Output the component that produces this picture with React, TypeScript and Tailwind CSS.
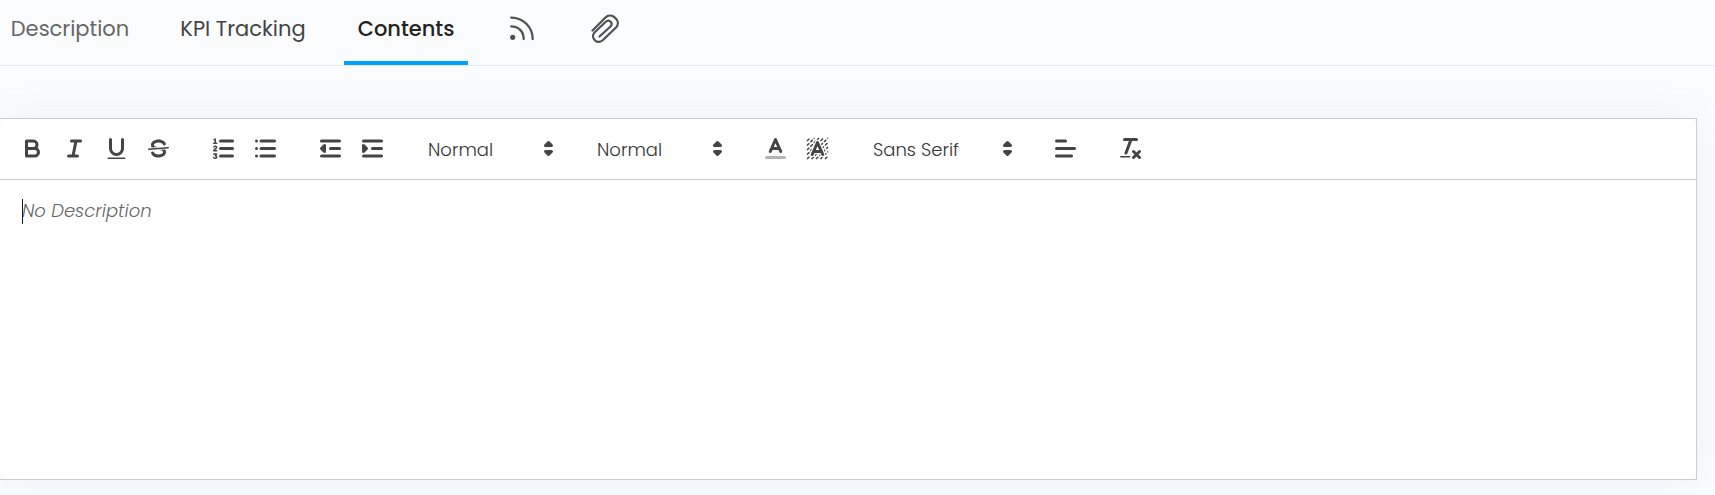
import React, { useState } from 'react'

const FONT = "font-['Poppins','Inter','Noto_Sans',sans-serif]"

const Glyph = ({ children }: { children: React.ReactNode }) => (
  <svg viewBox="0 0 18 18" className="h-[27px] w-[27px] fill-none stroke-[#444] stroke-2 [stroke-linecap:round] [stroke-linejoin:round]">
    {children}
  </svg>
)

const ToolButton = ({ label, children }: { label: string; children: React.ReactNode }) => (
  <button type="button" aria-label={label} className="flex h-9 w-[42px] items-center justify-center">
    <Glyph>{children}</Glyph>
  </button>
)

const Picker = ({ label, options, className }: { label: string; options: string[]; className: string }) => (
  <div className={`relative flex h-9 items-center ${className}`}>
    <select aria-label={label} className="h-full w-full appearance-none bg-transparent pt-1 pl-3 text-lg font-light text-[#333] outline-none">
      {options.map((option) => (
        <option key={option}>{option}</option>
      ))}
    </select>
    <span className="pointer-events-none absolute right-0">
      <Glyph>
        <polygon points="7 11 9 13 11 11 7 11" fill="#444" />
        <polygon points="7 7 9 5 11 7 7 7" fill="#444" />
      </Glyph>
    </span>
  </div>
)

// Diagonal hatch behind the highlight "A"
const HATCH = [
  'M2 4L4 2', 'M2 7L7 2', 'M2 10L10 2', 'M2 13L13 2', 'M2 16L16 2',
  'M5 16L16 5', 'M8 16L16 8', 'M11 16L16 11', 'M14 16L16 14',
]

const Toolbar = () => (
  <div className="flex flex-wrap gap-x-[23px] border border-[#ccc] pt-[11px] pb-[13px] pl-[11px]">
    <div className="flex">
      <ToolButton label="Bold">
        <path d="M5,4H9.5A2.5,2.5,0,0,1,12,6.5v0A2.5,2.5,0,0,1,9.5,9H5A0,0,0,0,1,5,9V4A0,0,0,0,1,5,4Z" />
        <path d="M5,9h5.5A2.5,2.5,0,0,1,13,11.5v0A2.5,2.5,0,0,1,10.5,14H5a0,0,0,0,1,0,0V9A0,0,0,0,1,5,9Z" />
      </ToolButton>
      <ToolButton label="Italic">
        <path d="M7 4H13M5 14H11M8 14L10 4" />
      </ToolButton>
      <ToolButton label="Underline">
        <path d="M5,3V9a4.012,4.012,0,0,0,4,4H9a4.012,4.012,0,0,0,4-4V3" />
        <rect x="3" y="15" width="12" height="1" rx="0.5" fill="#444" stroke="none" />
      </ToolButton>
      <ToolButton label="Strike">
        <path d="M15.5 8.5L2.5 9.5" strokeWidth="1" />
        <path fill="#444" stroke="none" d="M9.007,8C6.542,7.791,6,7.519,6,6.5,6,5.792,7.283,5,9,5c1.571,0,2.765.679,2.969,1.309a1,1,0,0,0,1.9-.617C13.356,4.106,11.354,3,9,3,6.2,3,4,4.538,4,6.5a3.2,3.2,0,0,0,.5,1.843Z" />
        <path fill="#444" stroke="none" d="M8.984,10C11.457,10.208,12,10.479,12,11.5c0,0.708-1.283,1.5-3,1.5-1.571,0-2.765-.679-2.969-1.309a1,1,0,1,0-1.9.617C4.644,13.894,6.646,15,9,15c2.8,0,5-1.538,5-3.5a3.2,3.2,0,0,0-.5-1.843Z" />
      </ToolButton>
    </div>

    <div className="flex">
      <ToolButton label="Ordered list">
        <path d="M7 4H15M7 9H15M7 14H15" />
        <path strokeWidth="1" d="M2.5 5.5H4.5M2.7 3.1L3.5 2.7V5.5" />
        <path strokeWidth="1" d="M2.6 8C3 7.3 4.4 7.4 4.4 8.3C4.4 9 2.6 9.6 2.5 10.5H4.5" />
        <path strokeWidth="1" d="M2.5 12.6H4.4L3.5 13.8C4.9 13.9 4.8 15.5 3.5 15.5C3 15.5 2.6 15.4 2.4 15.1" />
      </ToolButton>
      <ToolButton label="Bullet list">
        <path d="M6 4H15M6 9H15M6 14H15M3 4H3M3 9H3M3 14H3" />
      </ToolButton>
    </div>

    <div className="flex">
      <ToolButton label="Decrease indent">
        <path d="M3 14H15M3 4H15M9 9H15" />
        <polyline points="5 7 5 11 3 9 5 7" fill="#444" />
      </ToolButton>
      <ToolButton label="Increase indent">
        <path d="M3 14H15M3 4H15M9 9H15" />
        <polyline points="3 7 3 11 5 9 3 7" fill="#444" />
      </ToolButton>
    </div>

    <Picker label="Heading" options={['Normal', 'Heading 1', 'Heading 2']} className="w-[146px]" />
    <Picker label="Size" options={['Normal', 'Small', 'Large', 'Huge']} className="w-[146px]" />

    <div className="flex">
      <ToolButton label="Text colour">
        <path d="M3 15H15" opacity="0.4" />
        <path d="M5.5 11L9 3L12.5 11M11.63 9H6.38" />
      </ToolButton>
      <ToolButton label="Highlight colour">
        {HATCH.map((d) => (
          <path key={d} d={d} strokeWidth="1" strokeDasharray="2.2 1" className="[stroke-linecap:butt]" />
        ))}
        <path d="M5.5 13L9 5L12.5 13M11.63 11H6.38" className="stroke-white stroke-[3.5]" />
        <path d="M5.5 13L9 5L12.5 13M11.63 11H6.38" />
      </ToolButton>
    </div>

    <Picker label="Font" options={['Sans Serif', 'Serif', 'Monospace']} className="w-40" />

    <ToolButton label="Align">
      <path d="M3 9H15M3 14H13M3 4H9" />
    </ToolButton>
    <ToolButton label="Clear formatting">
      <path d="M5 3H13M6 12L9.35 3M11 11L15 15M15 11L11 15" />
      <rect x="2" y="14" width="7" height="1" rx="0.5" fill="#444" stroke="none" />
    </ToolButton>
  </div>
)

const TAB = 'flex h-[65px] items-start justify-center border-b-4 pt-[13px] text-[21px] leading-8'

const Tabs = () => (
  <nav className="flex h-[66px] border-b border-[#e8e9ec]">
    <div className="-ml-0.5 flex gap-[25px]">
      <a href="#description" className={`${TAB} min-w-36 border-transparent text-[#666]`}>Description</a>
      <a href="#kpi" className={`${TAB} min-w-[152px] border-transparent text-[#444]`}>KPI Tracking</a>
      <a href="#contents" aria-current="page" className={`${TAB} min-w-[124px] border-[#00a2ff] font-medium text-[#222]`}>Contents</a>
      <a href="#feed" aria-label="Feed" className={`${TAB} w-[58px] border-transparent`}>
        <svg viewBox="0 0 28 28" className="h-[30px] w-7 fill-none stroke-[#505050] stroke-[2.3] [stroke-linecap:round]">
          <path d="M3.2 3.6C15 3.600 24.700 13 24.700 25M3.2 12.300C10.500 12.300 15.700 17.500 15.700 25" />
          <circle cx="4.700" cy="23.300" r="2.600" fill="#505050" stroke="none" />
        </svg>
      </a>
      <a href="#files" aria-label="Attachments" className={`${TAB} w-[58px] border-transparent`}>
        <svg viewBox="0 0 28 28" className="h-[30px] w-7 fill-none stroke-[#505050] stroke-[2.2] [stroke-linecap:round] [stroke-linejoin:round]">
          <path d="M1.500 16.500L14.500 3.500C20 -2 30.500 6 25.500 13L12 26C6 31 -1 24 3.500 18.500L14.500 8C18.500 4.500 22.500 9.500 19.500 12.500L8.500 22.500" />
        </svg>
      </a>
    </div>
  </nav>
)

export default function App() {
  const [content, setContent] = useState('')

  return (
    <main className={`min-h-screen overflow-hidden bg-[#fbfcfe] ${FONT}`}>
      <Tabs />
      <section className="mt-[52px] mr-[18px] -ml-px rounded-[10px] bg-white shadow-[0_0_35px_rgba(140,160,200,0.14)]">
        <Toolbar />
        <div className="relative border border-t-0 border-[#ccc]">
          <textarea
            aria-label="Description"
            placeholder="No Description"
            value={content}
            onChange={(e) => setContent(e.target.value)}
            className="block h-[299px] w-full resize-none bg-transparent px-[22px] py-[18px] text-lg leading-[26px] font-light text-[#444] caret-transparent outline-none placeholder:text-[#666] placeholder:italic"
          />
          {!content && <span className="absolute top-[19px] left-[22px] h-[25px] w-px bg-[#0b1a2e]" />}
        </div>
      </section>
    </main>
  )
}
